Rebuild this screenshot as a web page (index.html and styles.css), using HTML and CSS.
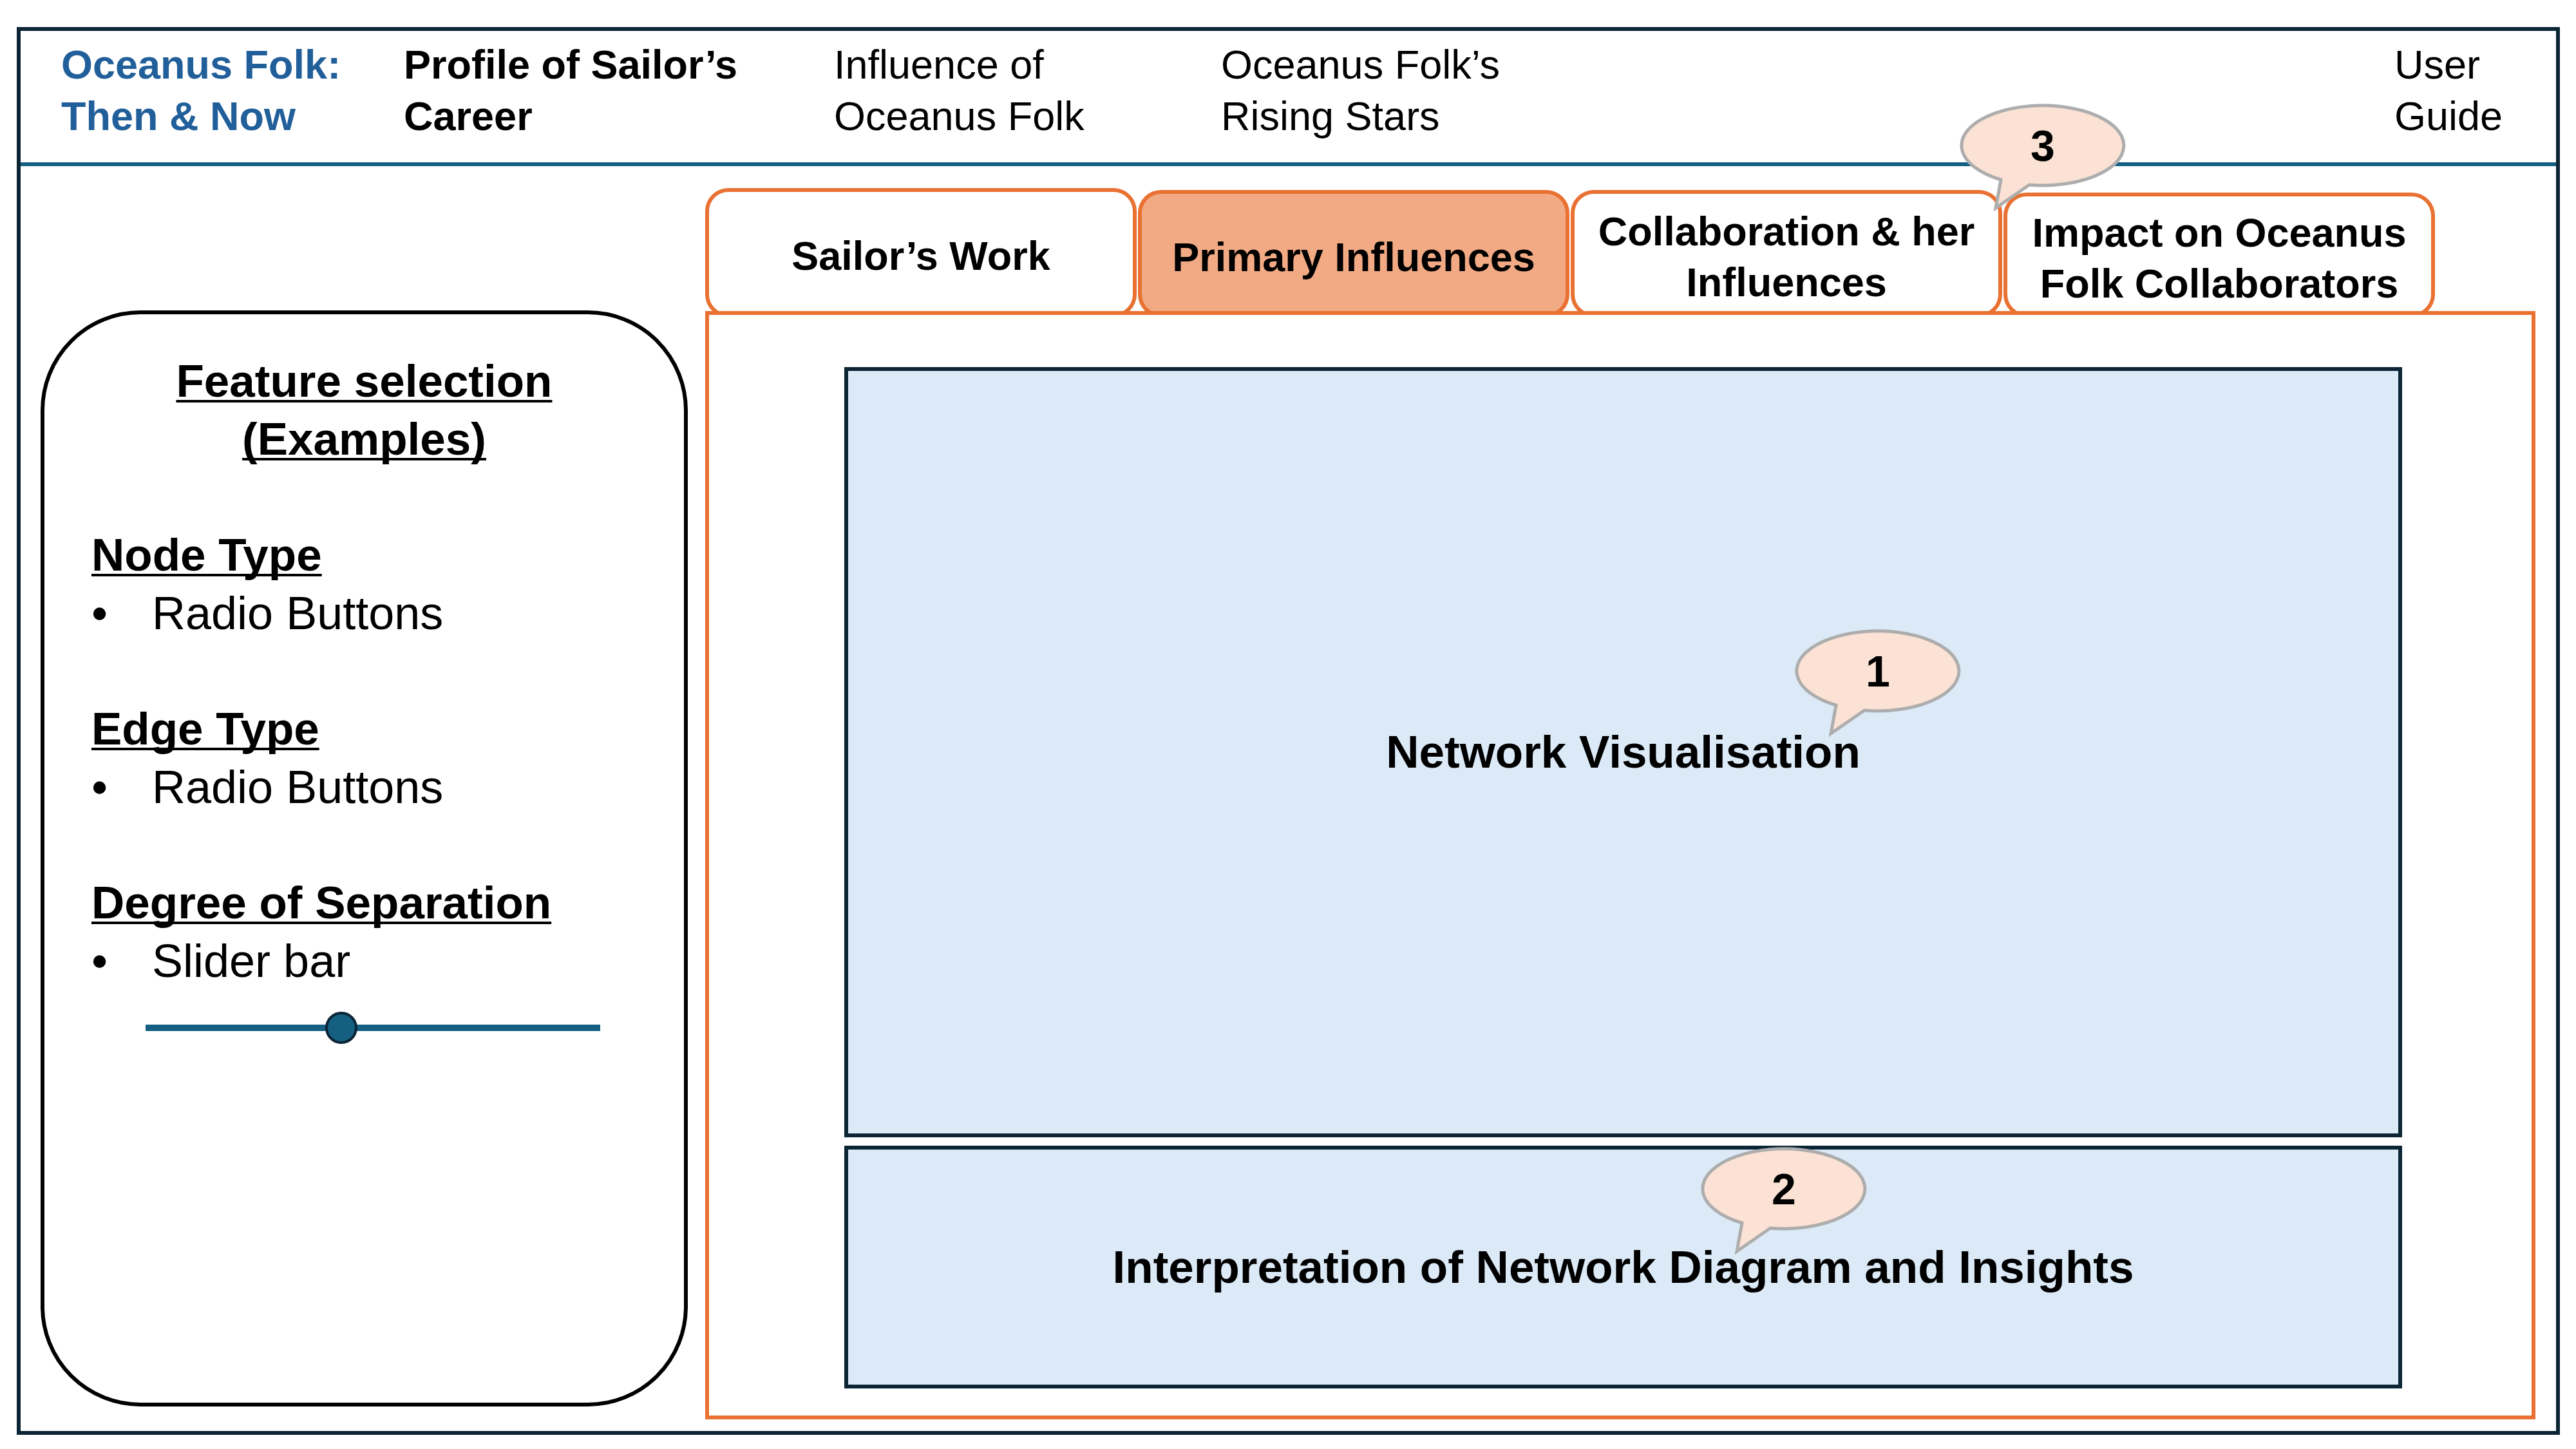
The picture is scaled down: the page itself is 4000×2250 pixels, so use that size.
FILE: index.html
```html
<!DOCTYPE html>
<html lang="en">
<head>
<meta charset="utf-8">
<title>Oceanus Folk: Then &amp; Now</title>
<link rel="stylesheet" href="styles.css">
</head>
<body>
<div class="frame">
  <header class="topnav">
    <div class="nav-item brand">Oceanus Folk:<br>Then &amp; Now</div>
    <div class="nav-item strong">Profile of Sailor’s<br>Career</div>
    <div class="nav-item">Influence of<br>Oceanus Folk</div>
    <div class="nav-item">Oceanus Folk’s<br>Rising Stars</div>
    <div class="nav-item">User<br>Guide</div>
  </header>

  <main class="main">
    <aside class="features">
      <h2 class="features-title"><span class="ul">Feature selection</span><br><span class="ul">(Examples)</span></h2>

      <section class="group">
        <h3 class="group-title"><span class="ul">Node Type</span></h3>
        <ul class="opts"><li><span class="bullet">•</span>Radio Buttons</li></ul>
      </section>

      <section class="group">
        <h3 class="group-title"><span class="ul">Edge Type</span></h3>
        <ul class="opts"><li><span class="bullet">•</span>Radio Buttons</li></ul>
      </section>

      <section class="group">
        <h3 class="group-title"><span class="ul">Degree of Separation</span></h3>
        <ul class="opts"><li><span class="bullet">•</span>Slider bar</li></ul>
        <div class="slider">
          <div class="slider-track"></div>
          <div class="slider-knob"></div>
        </div>
      </section>
    </aside>

    <section class="content">
      <nav class="tabs">
        <div class="tab t1">Sailor’s Work</div>
        <div class="tab t2 active">Primary Influences</div>
        <div class="tab t3">Collaboration &amp; her<br>Influences</div>
        <div class="tab t4">Impact on Oceanus<br>Folk Collaborators</div>
      </nav>
      <div class="panel">
        <div class="box box-net">
          Network Visualisation
          <div class="callout callout-1">
            <svg class="callout-shape" width="260" height="165" viewBox="0 0 260 165"><path d="M64,117 L56,161 L108,125 A126,62 0 1 0 64,117 Z"/></svg>
            <span class="callout-num">1</span>
          </div>
        </div>
        <div class="box box-interp">
          Interpretation of Network Diagram and Insights
          <div class="callout callout-2">
            <svg class="callout-shape" width="260" height="165" viewBox="0 0 260 165"><path d="M64,117 L56,161 L108,125 A126,62 0 1 0 64,117 Z"/></svg>
            <span class="callout-num">2</span>
          </div>
        </div>
      </div>
    </section>
  </main>

  <div class="callout callout-3">
    <svg class="callout-shape" width="260" height="165" viewBox="0 0 260 165"><path d="M64,117 L56,161 L108,125 A126,62 0 1 0 64,117 Z"/></svg>
    <span class="callout-num">3</span>
  </div>
</div>
</body>
</html>
```

FILE: styles.css
```css
* { box-sizing: border-box; }

html, body {
  margin: 0;
  padding: 0;
  background: #ffffff;
}

body {
  font-family: "Liberation Sans", Arial, sans-serif;
  color: #000;
}

.frame {
  position: relative;
  margin: 42px 0 0 26px;
  width: 3949px;
  height: 2186px;
  border: 6px solid #0b2535;
  display: flex;
  flex-direction: column;
}

/* ---------- top navigation ---------- */
.topnav {
  height: 210px;
  flex: none;
  border-bottom: 6px solid #156082;
  padding: 12px 0 0 63px;
  display: grid;
  grid-template-columns: 532px 668px 601px 1822px auto;
  align-items: start;
}

.nav-item {
  font-size: 63px;
  line-height: 80px;
  font-weight: 400;
  white-space: nowrap;
}

.nav-item.brand {
  color: #215f9a;
  font-weight: 700;
}

.nav-item.strong {
  font-weight: 700;
}

/* ---------- main area ---------- */
.main {
  flex: 1;
  display: flex;
  gap: 27px;
  padding: 0 32px 18px 31px;
}

/* left feature panel */
.features {
  flex: none;
  width: 1005px;
  height: 1702px;
  margin-top: 224px;
  border: 6px solid #000;
  border-radius: 155px;
  padding-top: 59px;
}

.ul {
  text-decoration: underline;
  text-decoration-thickness: 4px;
  text-underline-offset: 5px;
  text-decoration-skip-ink: none;
}

.features-title {
  margin: 0;
  font-size: 71px;
  line-height: 90px;
  font-weight: 700;
  text-align: center;
}

.group {
  margin-top: 90px;
  padding-left: 73px;
}

.group-title {
  margin: 0;
  font-size: 71px;
  line-height: 90px;
  font-weight: 700;
}

.opts {
  list-style: none;
  margin: 0;
  padding: 0;
}

.opts li {
  display: flex;
  font-size: 72px;
  line-height: 90px;
  font-weight: 400;
}

.bullet {
  width: 94px;
  flex: none;
}

.slider {
  position: relative;
  margin: 54px 0 0 84px;
  width: 706px;
  height: 10px;
}

.slider-track {
  height: 10px;
  background: #156082;
}

.slider-knob {
  position: absolute;
  left: 279px;
  top: -20px;
  width: 50px;
  height: 50px;
  border-radius: 50%;
  background: #156082;
  border: 4px solid #0b2535;
}

/* right content */
.content {
  flex: none;
  width: 2842px;
  display: flex;
  flex-direction: column;
}

.tabs {
  display: flex;
  align-items: flex-end;
  gap: 2px;
  height: 201px;
  margin-top: 34px;
  margin-bottom: -10px;
}

.tab {
  width: 670px;
  border: 6px solid #e97132;
  border-radius: 36px;
  background: #fff;
  display: flex;
  align-items: center;
  justify-content: center;
  text-align: center;
  padding-top: 10px;
  font-size: 63px;
  line-height: 79px;
  font-weight: 700;
  white-space: nowrap;
}

.tab.t1 { height: 201px; }
.tab.t2 { height: 198px; }
.tab.t3 { height: 198px; }
.tab.t4 { height: 194px; }

.tab.active {
  background: #f2aa84;
}

.panel {
  position: relative;
  z-index: 1;
  height: 1721px;
  border: 6px solid #e97132;
  background: #fff;
  padding: 81px 0 0 210px;
  display: flex;
  flex-direction: column;
}

.box {
  position: relative;
  width: 2419px;
  border: 6px solid #0b2535;
  background: #dceaf7;
  display: flex;
  align-items: center;
  justify-content: center;
  font-size: 71px;
  font-weight: 700;
  line-height: 90px;
}

.box-net { height: 1196px; }

.box-interp {
  height: 377px;
  margin-top: 13px;
}

/* callouts */
.callout {
  position: absolute;
  width: 260px;
  height: 165px;
  z-index: 5;
}

.callout-shape {
  display: block;
  overflow: visible;
}

.callout-shape path {
  fill: #fbe2d5;
  stroke: #adadad;
  stroke-width: 5;
  stroke-linejoin: miter;
}

.callout-num {
  position: absolute;
  left: 0;
  top: 0;
  width: 258px;
  height: 128px;
  display: flex;
  align-items: center;
  justify-content: center;
  font-size: 68px;
  font-weight: 700;
  line-height: 1;
}

.callout-1 { left: 1470px; top: 402px; }
.callout-2 { left: 1324px; top: -3px; }
.callout-3 { left: 3011px; top: 114px; }
```
